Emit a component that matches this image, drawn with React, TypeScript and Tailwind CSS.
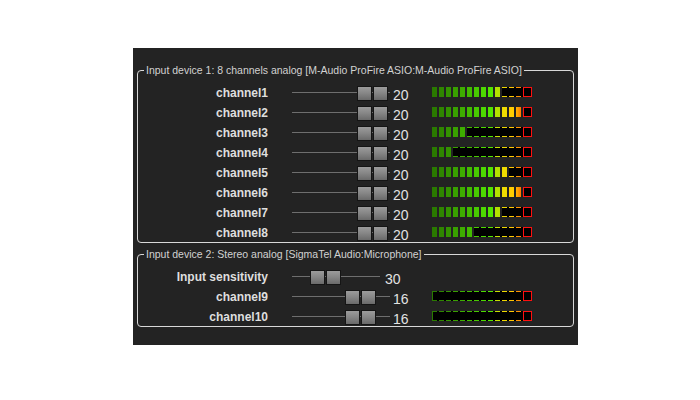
import { clsx } from 'clsx';

const FONT = "font-['Liberation_Sans',Arial,sans-serif]";

// one entry per meter segment, lit fill + unlit outline colour
const SEGMENTS = [
  { bg: 'bg-[#2a7a00]', bd: 'border-[#2a7a00]' },
  { bg: 'bg-[#2f8600]', bd: 'border-[#2f8600]' },
  { bg: 'bg-[#349300]', bd: 'border-[#349300]' },
  { bg: 'bg-[#39a000]', bd: 'border-[#39a000]' },
  { bg: 'bg-[#3eae00]', bd: 'border-[#3eae00]' },
  { bg: 'bg-[#43bc00]', bd: 'border-[#43bc00]' },
  { bg: 'bg-[#48ca00]', bd: 'border-[#48ca00]' },
  { bg: 'bg-[#4dd800]', bd: 'border-[#4dd800]' },
  { bg: 'bg-[#52e600]', bd: 'border-[#52e600]' },
  { bg: 'bg-[#b4e000]', bd: 'border-[#c8e000]' },
  { bg: 'bg-[#f0dc00]', bd: 'border-[#f0d800]' },
  { bg: 'bg-[#ffcc00]', bd: 'border-[#ffc800]' },
  { bg: 'bg-linear-to-r from-[#ffb400] to-[#ff7800]', bd: 'border-[#ff9000]' },
  { bg: 'bg-[#ff1010]', bd: 'border-[#ff1010]' },
];

function Meter({ level }: { level: number }) {
  return (
    <div className="flex h-[10px] w-[100px]">
      {SEGMENTS.map((seg, i) => {
        const lit = i < level;
        const last = i === SEGMENTS.length - 1;
        return (
          <div
            key={i}
            className={clsx('flex h-full', last ? 'w-[9px]' : 'w-[7px] pr-[2px]', !lit && 'bg-black')}
          >
            <div
              className={clsx(
                'h-full w-full',
                lit && seg.bg,
                !lit && seg.bd,
                !lit && (last ? 'border' : 'border-y'),
                !lit && i === 0 && 'border-l',
              )}
            />
          </div>
        );
      })}
    </div>
  );
}

function Slider({ width, pos }: { width: string; pos: number }) {
  return (
    <div className={clsx('relative h-[20px] shrink-0', width)}>
      <div className="absolute inset-x-0 top-[10px] h-px bg-[#6e6e6e]" />
      <div className="absolute top-[4px] flex gap-px" style={{ left: pos }}>
        <div className="h-[15px] w-[15px] border border-[#151515] bg-linear-to-b from-[#9c9c9c] via-[#858585] to-[#6a6a6a]" />
        <div className="h-[15px] w-[15px] border border-[#151515] bg-linear-to-b from-[#9c9c9c] via-[#858585] to-[#6a6a6a]" />
      </div>
    </div>
  );
}

interface RowProps {
  label: string;
  value: number;
  pos: number;
  sliderWidth?: string;
  valueGap?: string;
  level?: number;
}

function Row({ label, value, pos, sliderWidth = 'w-[98px]', valueGap = 'ml-[3px] w-[39px]', level }: RowProps) {
  return (
    <div className="flex h-[20px] items-center">
      <div className="w-[130px] shrink-0 pt-px text-right text-[12px] font-bold leading-none text-[#dedede]">
        {label}
      </div>
      <div className="ml-[24px]">
        <Slider width={sliderWidth} pos={pos} />
      </div>
      <div className={clsx('shrink-0 pt-[5px] text-[14px] leading-none text-[#e2e2e2]', valueGap)}>
        {value}
      </div>
      {level !== undefined && <Meter level={level} />}
    </div>
  );
}

function Group({ title, className, children }: { title: string; className?: string; children: React.ReactNode }) {
  return (
    <fieldset className={clsx('rounded-[4px] border border-[#d8d8d8] px-0 pt-[6px]', className)}>
      <legend className="ml-[6px] px-[2px] text-[10.5px] leading-[12px] text-[#d2d2d2]">
        {title}
      </legend>
      {children}
    </fieldset>
  );
}

const CHANNELS = [
  { label: 'channel1', level: 10 },
  { label: 'channel2', level: 13 },
  { label: 'channel3', level: 5 },
  { label: 'channel4', level: 3 },
  { label: 'channel5', level: 11 },
  { label: 'channel6', level: 13 },
  { label: 'channel7', level: 10 },
  { label: 'channel8', level: 6 },
];

export default function App() {
  return (
    <div className={clsx('h-[400px] w-[700px] bg-white pl-[133px] pt-[48px]', FONT)}>
      <div className="h-[297px] w-[445px] bg-[#232323] px-[4px] pt-[16px]">
        <Group title="Input device 1: 8 channels analog [M-Audio ProFire ASIO:M-Audio ProFire ASIO]">
          {CHANNELS.map((c) => (
            <Row key={c.label} label={c.label} value={20} pos={65} level={c.level} />
          ))}
        </Group>
        <Group title="Input device 2: Stereo analog [SigmaTel Audio:Microphone]" className="mt-[5px]">
          <Row label="Input sensitivity" value={30} pos={18} sliderWidth="w-[88px]" valueGap="ml-[5px] w-[40px]" />
          <Row label="channel9" value={16} pos={53} level={0} />
          <Row label="channel10" value={16} pos={53} level={0} />
        </Group>
      </div>
    </div>
  );
}
